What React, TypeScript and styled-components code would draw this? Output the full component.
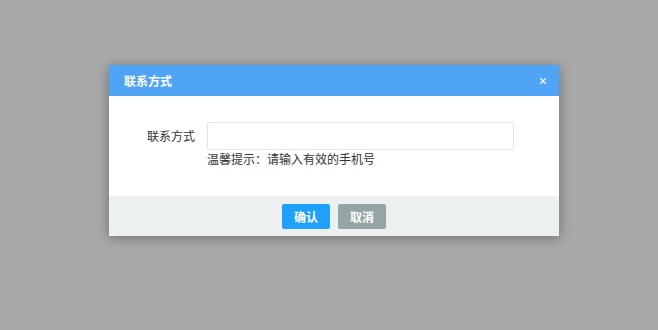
import React, { useState } from "react";
import styled, { createGlobalStyle } from "styled-components";

const GlobalStyle = createGlobalStyle`
  html, body {
    margin: 0;
    padding: 0;
    height: 100%;
    background: #a9a9a9;
    font-family: "Noto Sans CJK SC", "Noto Sans", sans-serif;
  }
  #root {
    min-height: 100%;
  }
`;

const Overlay = styled.div`
  display: flex;
  justify-content: center;
  align-items: flex-start;
  padding: 65px 0 0 10px;
  min-height: 330px;
  box-sizing: border-box;
`;

const Dialog = styled.div`
  width: 450px;
  background: #fff;
  box-shadow: 0 2px 12px rgba(0, 0, 0, 0.35);
`;

const Header = styled.div`
  height: 31px;
  background: #4fa4f6;
  display: flex;
  align-items: center;
  justify-content: space-between;
  padding: 0 12px 0 15px;
`;

const Title = styled.span`
  color: #fff;
  font-size: 12px;
  font-weight: bold;
`;

const Close = styled.span`
  color: #fff;
  font-size: 14px;
  line-height: 1;
  cursor: pointer;
  font-family: "Liberation Sans", Arial, sans-serif;
`;

const Body = styled.div`
  padding: 26px 0 28px;
`;

const Row = styled.div`
  display: flex;
  align-items: flex-start;
`;

const Label = styled.label`
  width: 86px;
  margin-right: 12px;
  text-align: right;
  font-size: 12px;
  color: #333;
  line-height: 28px;
`;

const Field = styled.div`
  display: flex;
  flex-direction: column;
`;

const Input = styled.input`
  width: 307px;
  height: 28px;
  box-sizing: border-box;
  border: 1px solid #e4e4e4;
  border-radius: 2px;
  outline: none;
  padding: 0 8px;
  font-size: 12px;
  font-family: inherit;
`;

const Hint = styled.div`
  font-size: 12px;
  color: #333;
  line-height: 18px;
`;

const Footer = styled.div`
  height: 40px;
  background: #ecf0f1;
  display: flex;
  justify-content: center;
  align-items: center;
  gap: 8px;
`;

const Button = styled.button<{ $variant: "primary" | "muted" }>`
  width: 48px;
  height: 25px;
  border: none;
  border-radius: 2px;
  color: #fff;
  font-size: 12px;
  font-weight: bold;
  font-family: inherit;
  cursor: pointer;
  padding: 0;
  background: ${(p) => (p.$variant === "primary" ? "#1ea0ff" : "#95a5a6")};
`;

export default function App() {
  const [phone, setPhone] = useState("");
  return (
    <>
      <GlobalStyle />
      <Overlay>
        <Dialog>
          <Header>
            <Title>联系方式</Title>
            <Close>×</Close>
          </Header>
          <Body>
            <Row>
              <Label>联系方式</Label>
              <Field>
                <Input value={phone} onChange={(e) => setPhone(e.target.value)} />
                <Hint>温馨提示：请输入有效的手机号</Hint>
              </Field>
            </Row>
          </Body>
          <Footer>
            <Button $variant="primary">确认</Button>
            <Button $variant="muted">取消</Button>
          </Footer>
        </Dialog>
      </Overlay>
    </>
  );
}
